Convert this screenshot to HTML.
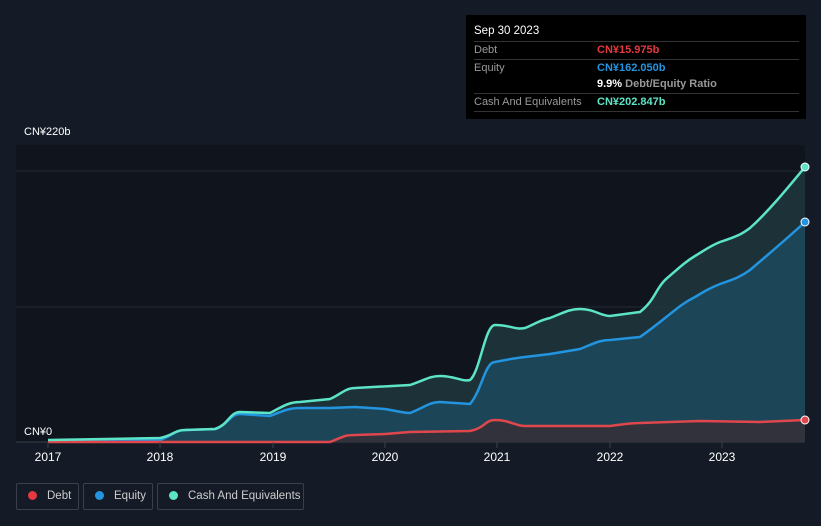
<!DOCTYPE html><html><head><style>
html,body{margin:0;width:821px;height:526px;overflow:hidden}
body{background:#151b26;font-family:"Liberation Sans",sans-serif;position:relative}
.tt{position:absolute;left:466px;top:15px;width:340px;height:104px;background:#000;color:#fff;font-size:11px}
.tt .h{position:absolute;left:8px;top:10px;font-size:11.5px}
.row{position:absolute;left:8px;width:325px;height:17px;border-top:1px solid #333;line-height:17px;color:#999}
.row span{position:absolute;left:123px;font-weight:bold}
.lg{position:absolute;top:483px;height:27px;border:1px solid #3a404b;border-radius:2px;color:#ccc;font-size:11.5px;line-height:25px;box-sizing:border-box;white-space:nowrap}
.lg i{display:inline-block;width:9px;height:9px;border-radius:50%;margin:0 10px 0 11px;vertical-align:-1px}
</style></head><body>
<svg width="821" height="526" style="position:absolute;left:0;top:0">
<rect x="16" y="145" width="789" height="297" fill="#0f141d"/>
<line x1="16" y1="171" x2="805" y2="171" stroke="#262c36"/>
<line x1="16" y1="307" x2="805" y2="307" stroke="#262c36"/>
<line x1="16" y1="442" x2="805" y2="442" stroke="#3a404b"/>
<path d="M48,440 L160,438 C172,436 175,430 185,430 L215,429 C228,425 230,412 240,412 L270,413 C285,405 290,402 300,402 L330,399 C340,395 345,388 355,388 L410,385 C425,380 430,376 440,376 C455,376 462,382 470,380 C480,372 485,325 495,325 C510,325 515,330 525,328 C535,324 540,320 550,318 C565,312 570,309 580,309 C595,309 600,316 610,316 L640,312 C655,300 655,290 665,280 C680,267 685,262 695,256 C705,250 710,246 720,242 C738,236 742,234 750,228 C770,210 790,185 805,167 L805,442 L48,442Z" fill="#1f3a40" fill-opacity="0.8"/>
<path d="M48,441 L160,440 C172,436 175,430 185,430 L215,429 C228,425 230,414 240,414 L270,416 C285,410 290,408 300,408 L330,408 L355,407 L385,409 C398,411 402,413 410,413 C425,407 430,402 440,402 L470,404 C482,390 485,362 495,362 C510,359 515,358 525,357 L550,354 L580,349 C595,343 600,340 610,340 L640,337 C650,330 655,326 665,318 C680,306 685,302 695,297 C705,291 710,288 720,284 C735,279 742,276 750,270 C770,253 790,236 805,222 L805,442 L48,442Z" fill="#1d4f66" fill-opacity="0.7"/>
<path d="M48,442 L330,442 C345,436 345,435 355,435 L385,434 L410,432 L470,431 C485,428 485,420 495,420 C510,420 515,426 525,426 L610,426 C625,424 630,423 640,423 L700,421 L760,422 L805,420 L805,442 L48,442Z" fill="#3a2a30" fill-opacity="0.7"/>
<path d="M48,441 L160,440 C172,436 175,430 185,430 L215,429 C228,425 230,414 240,414 L270,416 C285,410 290,408 300,408 L330,408 L355,407 L385,409 C398,411 402,413 410,413 C425,407 430,402 440,402 L470,404 C482,390 485,362 495,362 C510,359 515,358 525,357 L550,354 L580,349 C595,343 600,340 610,340 L640,337 C650,330 655,326 665,318 C680,306 685,302 695,297 C705,291 710,288 720,284 C735,279 742,276 750,270 C770,253 790,236 805,222" fill="none" stroke="#2394df" stroke-width="2.5"/>
<path d="M48,442 L330,442 C345,436 345,435 355,435 L385,434 L410,432 L470,431 C485,428 485,420 495,420 C510,420 515,426 525,426 L610,426 C625,424 630,423 640,423 L700,421 L760,422 L805,420" fill="none" stroke="#e0474c" stroke-width="2.5"/>
<path d="M48,440 L160,438 C172,436 175,430 185,430 L215,429 C228,425 230,412 240,412 L270,413 C285,405 290,402 300,402 L330,399 C340,395 345,388 355,388 L410,385 C425,380 430,376 440,376 C455,376 462,382 470,380 C480,372 485,325 495,325 C510,325 515,330 525,328 C535,324 540,320 550,318 C565,312 570,309 580,309 C595,309 600,316 610,316 L640,312 C655,300 655,290 665,280 C680,267 685,262 695,256 C705,250 710,246 720,242 C738,236 742,234 750,228 C770,210 790,185 805,167" fill="none" stroke="#5de4c7" stroke-width="2.5"/>
<circle cx="805" cy="167" r="4" fill="#5de4c7" stroke="#fff" stroke-width="1"/>
<circle cx="805" cy="222" r="4" fill="#2394df" stroke="#fff" stroke-width="1"/>
<circle cx="805" cy="420" r="4" fill="#e0474c" stroke="#fff" stroke-width="1"/>
<g stroke="#3a404b"><line x1="48" y1="442" x2="48" y2="448"/><line x1="160" y1="442" x2="160" y2="448"/><line x1="273" y1="442" x2="273" y2="448"/><line x1="385" y1="442" x2="385" y2="448"/><line x1="497" y1="442" x2="497" y2="448"/><line x1="610" y1="442" x2="610" y2="448"/><line x1="722" y1="442" x2="722" y2="448"/></g>
<g fill="#fff" font-size="12" text-anchor="middle" font-family="Liberation Sans"><text x="48" y="461">2017</text><text x="160" y="461">2018</text><text x="273" y="461">2019</text><text x="385" y="461">2020</text><text x="497" y="461">2021</text><text x="610" y="461">2022</text><text x="722" y="461">2023</text></g>
<text x="24" y="135" fill="#fff" font-size="11" font-family="Liberation Sans">CN¥220b</text>
<text x="24" y="435" fill="#fff" font-size="11" font-family="Liberation Sans">CN¥0</text>
</svg>
<div class="tt"><div class="h">Sep 30 2023</div>
<div class="row" style="top:26px">Debt<span style="color:#e5383f">CN¥15.975b</span></div>
<div class="row" style="top:44px">Equity<span style="color:#2394df">CN¥162.050b</span></div>
<div class="row" style="top:61px;border-top:none"><span style="color:#fff">9.9% <b style="color:#999">Debt/Equity Ratio</b></span></div>
<div class="row" style="top:78px">Cash And Equivalents<span style="color:#5de4c7">CN¥202.847b</span></div>
<div class="row" style="top:96px;height:0"></div>
</div>
<div class="lg" style="left:16px;width:63px"><i style="background:#e5383f"></i>Debt</div>
<div class="lg" style="left:83px;width:70px"><i style="background:#2394df"></i>Equity</div>
<div class="lg" style="left:157px;width:147px"><i style="background:#5de4c7"></i>Cash And Equivalents</div>
</body></html>
